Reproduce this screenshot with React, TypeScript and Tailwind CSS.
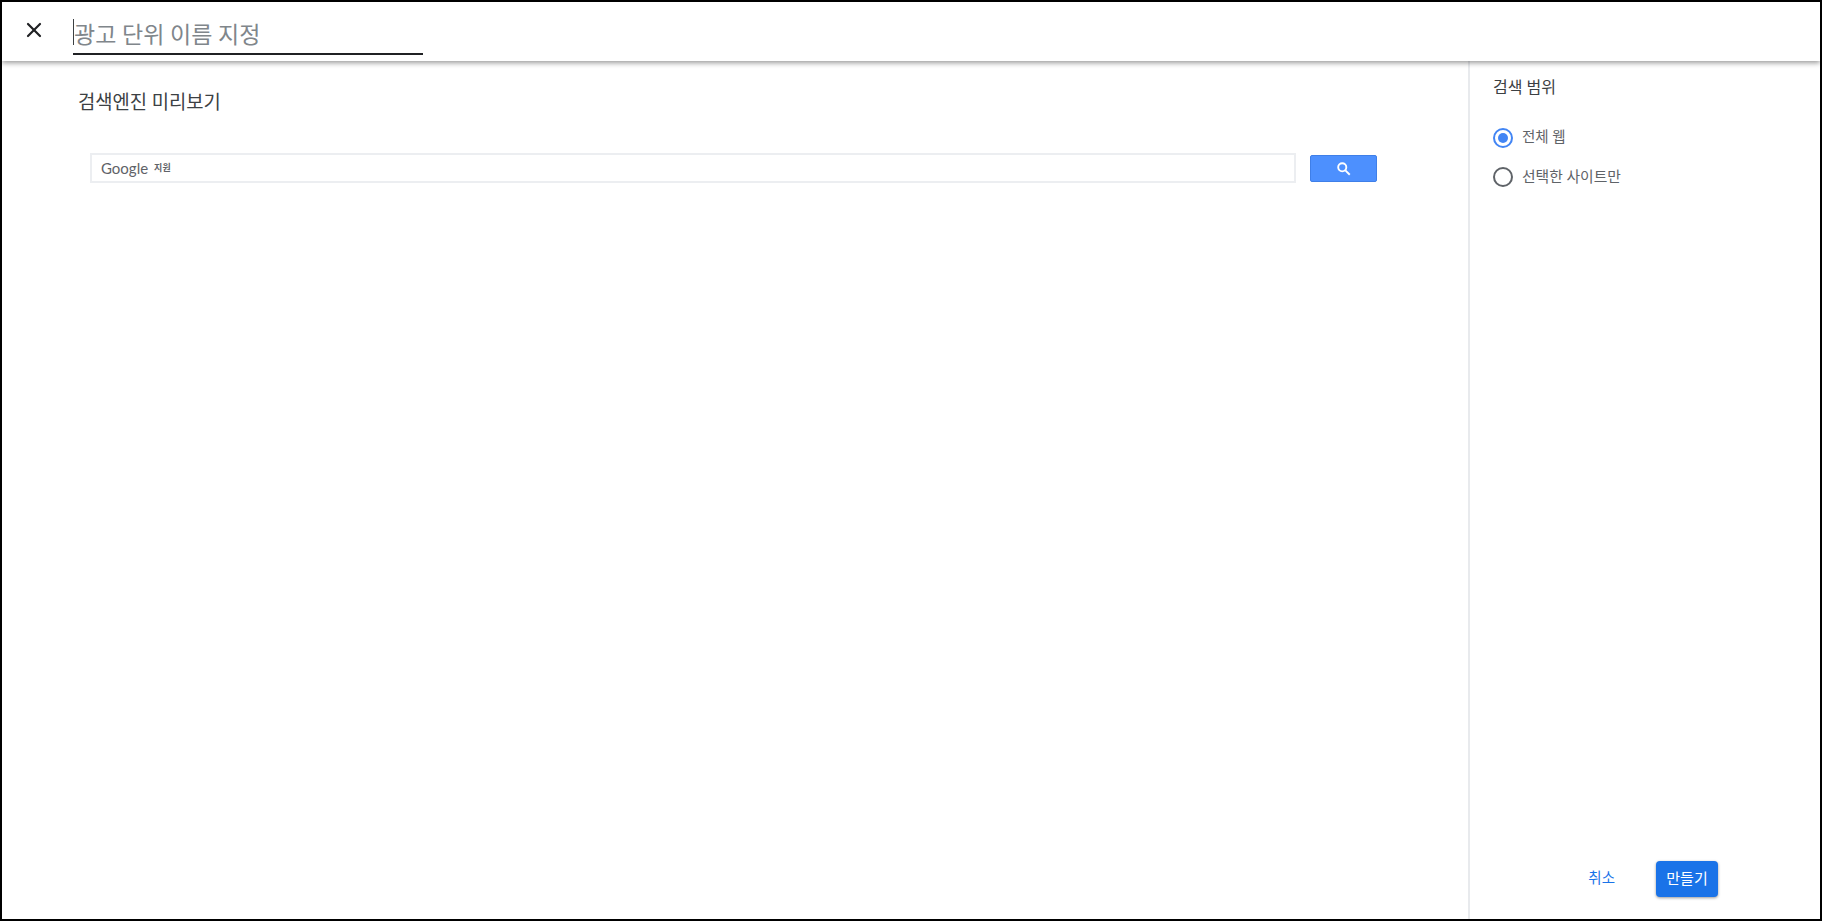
import { X } from "lucide-react";

const font = { fontFamily: '"Roboto", "Noto Sans CJK KR", sans-serif' };

export default function App() {
  return (
    <div className="flex flex-col h-[921px] w-[1822px] overflow-hidden border-2 border-black bg-white" style={font}>
      {/* top bar */}
      <div className="relative z-10 flex h-[59px] shrink-0 items-start bg-white shadow-[0_2px_5px_rgba(0,0,0,0.4)]">
        <X className="ml-[20px] mt-[16px] h-[24px] w-[24px] text-[#202124]" strokeWidth={2.2} />
        <div className="ml-[27px] mt-[17px] flex h-[36px] w-[350px] items-start border-b-2 border-[#202124]">
          <div className="h-[26px] w-px bg-[#3c4043]" />
          <span className="mt-[2px] text-[23px] leading-[30px] text-[#80868b]">광고 단위 이름 지정</span>
        </div>
      </div>

      <div className="flex flex-1 min-h-0">
        {/* preview */}
        <div className="flex-1 min-w-0 pl-[76px] pt-[29px]">
          <h2 className="text-[18.8px] leading-[26px] font-normal text-[#3c4043]">검색엔진 미리보기</h2>
          <div className="mt-[37px] ml-[12px] flex items-center gap-[14px]">
            <div className="flex h-[30px] w-[1206px] items-center border-2 border-[#eceef1] pl-[9px]">
              <span className="text-[15px] leading-none text-[#5f6368]" style={{ fontFamily: "Lato, sans-serif" }}>Google</span>
              <span className="ml-[6px] text-[9px] font-bold leading-none text-[#5f6368]">지원</span>
            </div>
            <div className="flex h-[27px] w-[67px] items-center justify-center rounded-[2px] border border-[#3f7fe8] bg-[#4d90fe]">
              <svg viewBox="0 0 24 24" className="h-[15px] w-[15px]" fill="none" stroke="white" strokeWidth="3">
                <circle cx="10" cy="10" r="6.5" />
                <path d="M15 15l7 7" />
              </svg>
            </div>
          </div>
        </div>

        {/* right panel */}
        <div className="flex w-[352px] shrink-0 flex-col border-l-2 border-[#e8eaed] pl-[23px]">
          <h3 className="mt-[16px] text-[16px] leading-[22px] font-normal text-[#3c4043]">검색 범위</h3>
          <div className="mt-[29px] flex items-center gap-[9px]">
            <span className="flex h-[20px] w-[20px] items-center justify-center rounded-full border-2 border-[#4285f4]">
              <span className="h-[10px] w-[10px] rounded-full bg-[#4285f4]" />
            </span>
            <span className="text-[14.5px] leading-[20px] text-[#5f6368]">전체 웹</span>
          </div>
          <div className="mt-[19px] flex items-center gap-[9px]">
            <span className="h-[20px] w-[20px] rounded-full border-2 border-[#5f6368]" />
            <span className="text-[14.8px] leading-[20px] text-[#5f6368]">선택한 사이트만</span>
          </div>
          <div className="mt-auto mb-[22px] flex items-center justify-end pr-[102px]">
            <button className="mr-[41px] text-[14.5px] font-normal text-[#1a73e8]">취소</button>
            <button className="h-[36px] w-[62px] rounded-[4px] bg-[#1a73e8] text-[15px] font-normal text-white shadow-[0_1px_3px_rgba(0,0,0,0.4)]">
              만들기
            </button>
          </div>
        </div>
      </div>
    </div>
  );
}
